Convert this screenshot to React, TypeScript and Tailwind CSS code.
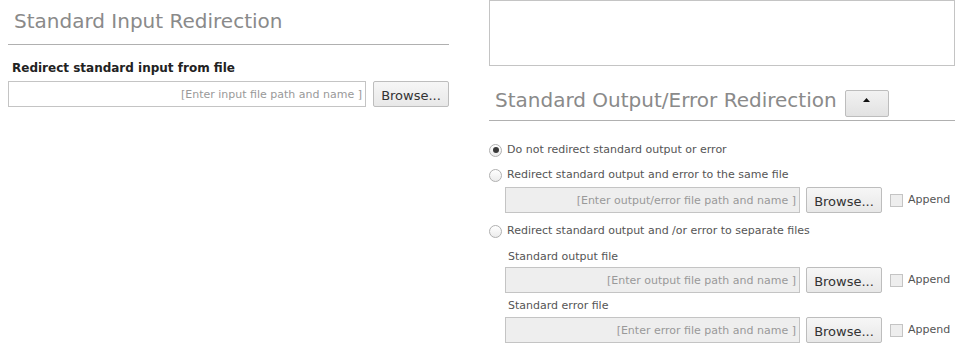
import React from "react";

const font = { fontFamily: '"DejaVu Sans", Verdana, sans-serif' };

function Browse() {
  return (
    <button className="h-[26px] w-[76px] shrink-0 rounded-[2px] border border-[#bdbdbd] bg-gradient-to-b from-[#f6f6f6] to-[#e8e8e8] pt-[3px] text-[13px] text-[#333]">
      Browse...
    </button>
  );
}

function Radio({ checked, label }: { checked?: boolean; label: string }) {
  return (
    <div className="flex h-[20px] items-center">
      <span className="flex h-[13px] w-[13px] items-center justify-center rounded-full border border-[#b0b0b0] bg-gradient-to-b from-white to-[#ececec]">
        {checked && <span className="h-[6px] w-[6px] rounded-full bg-[#3a3a3a]" />}
      </span>
      <span className="ml-[5px] text-[11px] text-[#555]">{label}</span>
    </div>
  );
}

function FileRow({ placeholder }: { placeholder: string }) {
  return (
    <div className="ml-[16px] flex items-center">
      <div className="flex h-[26px] w-[295px] items-center justify-end border border-[#c4c4c4] bg-[#eeeeee] pr-[3px] pt-[2px] text-[11px] text-[#999]">
        {placeholder}
      </div>
      <div className="ml-[6px]">
        <Browse />
      </div>
      <span className="ml-[8px] h-[13px] w-[13px] border border-[#c4c4c4] bg-[#eeeeee]" />
      <span className="ml-[5px] text-[11px] text-[#555]">Append</span>
    </div>
  );
}

export default function App() {
  return (
    <div className="flex h-[348px] w-[963px] justify-between overflow-hidden bg-white px-2" style={font}>
      {/* stdin */}
      <div className="w-[441px]">
        <div className="border-b border-[#b0b0b0] pb-[11px] pl-[6px] pt-[9px] text-[20px] leading-[24px] text-[#8a8a8a]">
          Standard Input Redirection
        </div>
        <div className="mt-[15px] pl-[4px] text-[12px] font-bold leading-[16px] text-[#222]">
          Redirect standard input from file
        </div>
        <div className="mt-[5px] flex items-center gap-[7px]">
          <div className="flex h-[26px] flex-1 items-center justify-end border border-[#c4c4c4] bg-white pr-[3px] pt-[2px] text-[11px] text-[#999]">
            [Enter input file path and name ]
          </div>
          <Browse />
        </div>
      </div>

      {/* stdout / stderr */}
      <div className="w-[466px]">
        <div className="h-[66px] border border-[#c4c4c4] bg-white" />
        <div className="flex items-start border-b border-[#b0b0b0] pb-[3px] pl-[6px] pt-[22px]">
          <span className="text-[20px] leading-[24px] text-[#8a8a8a]">Standard Output/Error Redirection</span>
          <button className="ml-[8px] mt-[2px] flex h-[27px] w-[44px] justify-center rounded-[2px] border border-[#bdbdbd] bg-gradient-to-b from-[#f2f2f2] to-[#e2e2e2] pt-[7px]">
            <svg width="7" height="4" viewBox="0 0 7 4">
              <path d="M3.5 0 L7 4 L0 4 Z" fill="#111" />
            </svg>
          </button>
        </div>

        <div className="mt-[19px]">
          <Radio checked label="Do not redirect standard output or error" />
        </div>
        <div className="mt-[5px]">
          <Radio label="Redirect standard output and error to the same file" />
        </div>
        <div className="mt-[2px]">
          <FileRow placeholder="[Enter output/error file path and name ]" />
        </div>
        <div className="mt-[8px]">
          <Radio label="Redirect standard output and /or error to separate files" />
        </div>
        <div className="ml-[19px] mt-[7px] h-[18px] text-[11px] leading-[18px] text-[#555]">Standard output file</div>
        <div className="mt-[1px]">
          <FileRow placeholder="[Enter output file path and name ]" />
        </div>
        <div className="ml-[19px] mt-[4px] h-[18px] text-[11px] leading-[18px] text-[#555]">Standard error file</div>
        <div className="mt-[2px]">
          <FileRow placeholder="[Enter error file path and name ]" />
        </div>
      </div>
    </div>
  );
}
